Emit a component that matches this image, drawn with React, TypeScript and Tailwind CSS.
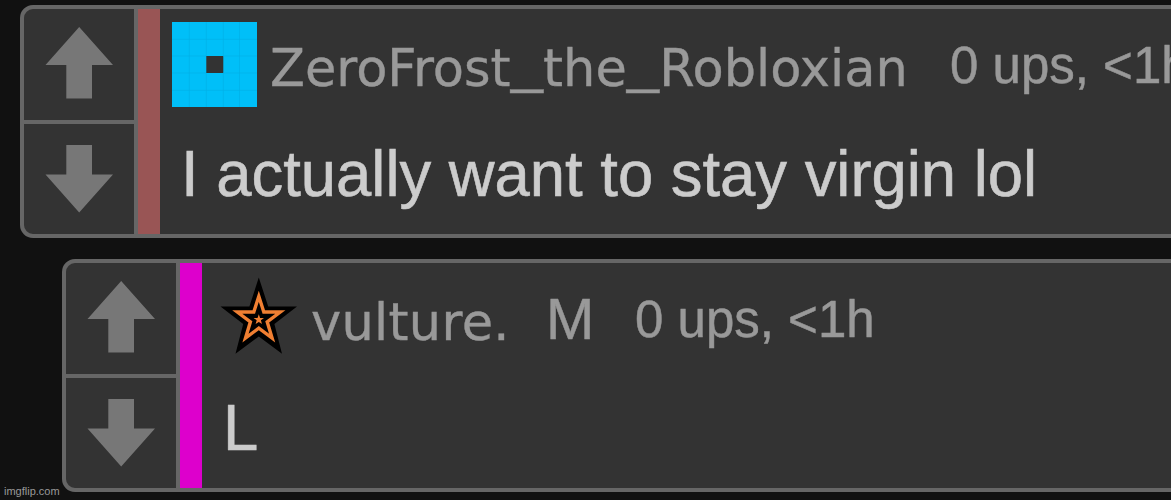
import React from 'react';

interface CommentProps {
  barClass: string;
  className: string;
  children: React.ReactNode;
}

const VoteArrow: React.FC<{ down?: boolean }> = ({ down }) => (
  <svg
    width="68"
    height={down ? 68 : 72}
    viewBox={down ? '0 0 68 68' : '0 0 68 72'}
    fill="#777777"
    className="shrink-0"
  >
    {down ? (
      <path d="M21.3 0H47v29.5h21L34.2 67.5 0.5 29.5h20.8z" />
    ) : (
      <path d="M34.2 0L68 38H47v33.5H21.3V38H0.5z" />
    )}
  </svg>
);

const Comment: React.FC<CommentProps> = ({ barClass, className, children }) => (
  <article className={`flex h-[233px] w-[1300px] shrink-0 overflow-hidden rounded-[13px] border-4 border-[#666666] bg-[#333333] ${className}`}>
    <div className="flex w-[114px] shrink-0 flex-col border-r-4 border-[#666666]">
      <button className="flex h-[115px] justify-center border-b-4 border-[#666666] pt-[17.5px]">
        <VoteArrow />
      </button>
      <button className="flex justify-center pt-[21px]">
        <VoteArrow down />
      </button>
    </div>
    <div className={`w-[22px] shrink-0 ${barClass}`} />
    <div className="flex flex-col whitespace-nowrap">{children}</div>
  </article>
);

const SquareAvatar = () => (
  <svg width="85" height="85" viewBox="0 0 85 85" className="ml-[12px] mt-[13px] shrink-0">
    <path fill="#00bff8" fillRule="evenodd" d="M0 0h85v85H0zM34.3 34v17h17V34z" />
    <path
      d="M17.3 0v85M34.3 0v34M34.3 51v34M51.3 0v34M51.3 51v34M67.5 0v85M0 17.3h85M0 34h34M51 34h34M0 51h34M51 51h34M0 68.3h85"
      stroke="#00aee6"
      strokeWidth="0.6"
    />
  </svg>
);

const StarAvatar = () => (
  <svg width="78" height="78" viewBox="0 0 78 78" className="ml-[18px] mt-[14px] shrink-0">
    <path
      fill="#000000"
      d="M38.8 0.5L48.2 29.5H77L54.4 47 62 76.8 38.8 59.5 15.5 76.8 23.2 47 0.5 29.5H29.4z"
    />
    <path
      fill="none"
      stroke="#f07f32"
      strokeWidth="3.4"
      d="M38.8 19.3L43.8 35H60.3L47.2 44.8 52.1 61 38.8 51.2 25.5 61 30.4 44.8 17.3 35H33.8z"
    />
    <path
      fill="#f07f32"
      d="M38.8 37.3L40.1 41H44L40.9 43.3 42 47.1 38.8 44.9 35.6 47.1 36.7 43.3 33.6 41H37.5z"
    />
  </svg>
);

// wider underscore that sits a little closer to the baseline
const Underscore = () => (
  <span className="mx-[3.5px] inline-block -translate-y-[5px] scale-x-[1.26]">_</span>
);

const Username: React.FC<{ className: string; children: React.ReactNode }> = ({ className, children }) => (
  <span className={`font-['DejaVu_Sans',Verdana,sans-serif] text-[51px] leading-[60px] [-webkit-text-stroke:0.4px_#999999] ${className}`}>
    {children}
  </span>
);

const Stats = () => (
  <span className="mt-[28px] text-[51px] leading-[58px] [-webkit-text-stroke:0.5px_#999999]">0 ups, &lt;1h</span>
);

const Body: React.FC<{ children: React.ReactNode }> = ({ children }) => (
  <p className="ml-[21px] mt-[17px] origin-[0_58px] scale-y-[1.02] text-[63.4px] leading-[72px] text-[#cccccc] [-webkit-text-stroke:0.6px_#cccccc]">
    {children}
  </p>
);

export default function App() {
  return (
    <main className="relative flex h-[500px] w-full flex-col gap-[21px] overflow-hidden bg-[#111111] pt-[5px] font-['Liberation_Sans',Arial,sans-serif] text-[#999999]">
      <Comment barClass="bg-[#995555]" className="ml-[20px]">
        <header className="flex h-[112px]">
          <SquareAvatar />
          <Username className="ml-[13px] mt-[30px] w-[680px]">
            ZeroFrost
            <Underscore />
            the
            <Underscore />
            Robloxian
          </Username>
          <Stats />
        </header>
        <Body>I actually want to stay virgin lol</Body>
      </Comment>

      <Comment barClass="bg-[#dd00cc]" className="ml-[62px]">
        <header className="flex h-[112px]">
          <StarAvatar />
          <Username className="ml-[13px] mt-[30px] w-[235px] tracking-[0.3px]">vulture.</Username>
          <span className="mt-[23px] w-[89px] text-[58px] leading-[66px] [-webkit-text-stroke:0.5px_#999999]">M</span>
          <Stats />
        </header>
        <Body>L</Body>
      </Comment>

      <span className="absolute left-[4px] top-[485px] text-[11px] leading-[13px] text-[#999999]">imgflip.com</span>
    </main>
  );
}
